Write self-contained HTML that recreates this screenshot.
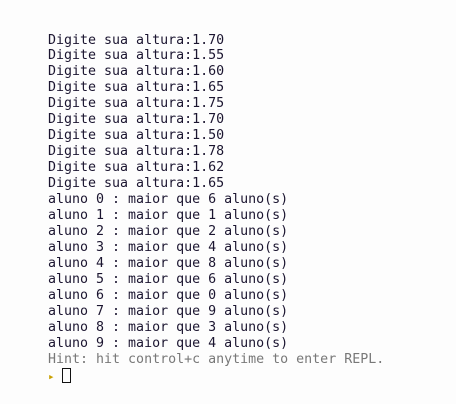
<!DOCTYPE html>
<html><head><style>
body{margin:0;background:#fdfdfd;width:456px;height:404px;overflow:hidden}
pre{margin:0;position:absolute;left:48px;top:32.5px;font-family:"DejaVu Sans Mono","Liberation Mono",monospace;font-size:13.3px;line-height:15.95px;color:#1b1530}
.h{color:#787878}
.p{color:#c9a000;font-size:11px}
.c{display:inline-block;width:7px;height:13px;border:1.3px solid #111;vertical-align:-3px;margin-left:7px}
</style></head><body><pre>Digite sua altura:1.70
Digite sua altura:1.55
Digite sua altura:1.60
Digite sua altura:1.65
Digite sua altura:1.75
Digite sua altura:1.70
Digite sua altura:1.50
Digite sua altura:1.78
Digite sua altura:1.62
Digite sua altura:1.65
aluno 0 : maior que 6 aluno(s)
aluno 1 : maior que 1 aluno(s)
aluno 2 : maior que 2 aluno(s)
aluno 3 : maior que 4 aluno(s)
aluno 4 : maior que 8 aluno(s)
aluno 5 : maior que 6 aluno(s)
aluno 6 : maior que 0 aluno(s)
aluno 7 : maior que 9 aluno(s)
aluno 8 : maior que 3 aluno(s)
aluno 9 : maior que 4 aluno(s)
<span class="h">Hint: hit control+c anytime to enter REPL.</span>
<span class="p">&#9656;</span><span class="c"></span></pre></body></html>
